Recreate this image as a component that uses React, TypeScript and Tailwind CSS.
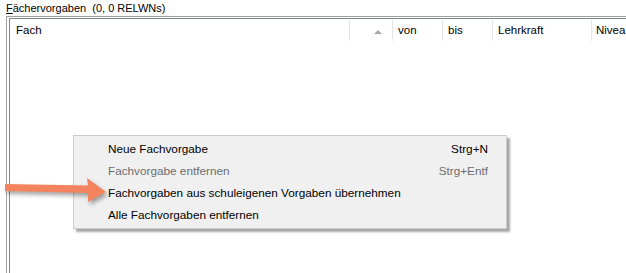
import React from "react";

const menuItems = [
  { label: "Neue Fachvorgabe", shortcut: "Strg+N", disabled: false },
  { label: "Fachvorgabe entfernen", shortcut: "Strg+Entf", disabled: true },
  { label: "Fachvorgaben aus schuleigenen Vorgaben übernehmen", shortcut: "", disabled: false },
  { label: "Alle Fachvorgaben entfernen", shortcut: "", disabled: false },
];

export default function App() {
  return (
    <div
      className="relative w-[626px] h-[273px] overflow-hidden bg-white text-black"
      style={{ fontFamily: '"Liberation Sans", Arial, sans-serif' }}
    >
      {/* Title */}
      <div className="h-[16px] pl-[6px] pt-[2px] text-[11px] leading-[13px] whitespace-pre">
        <span className="underline underline-offset-[1px]">F</span>ächervorgaben  (0, 0 RELWNs)
      </div>

      {/* Frame */}
      <div className="ml-[6px] border-l border-t border-[#a0a0a0] pl-[2px] pt-[1px] h-[257px]">
        <div className="h-full border-l border-t border-[#828790] bg-white">
          {/* Header */}
          <div className="flex h-[23px] items-stretch text-[11.5px] leading-[13px]">
            <div className="w-[339px] flex items-center pl-[6px] py-[1px]">
              <span>Fach</span>
            </div>
            <div className="w-[43px] flex items-center justify-end pr-[10px] border-l border-[#e5e5e5] my-[1px]">
              <svg width="8" height="5" viewBox="0 0 8 5" className="mt-[1px]">
                <polygon points="0,5 4,1 8,5" fill="#a7a7a7" />
              </svg>
            </div>
            <div className="w-[50px] flex items-center pl-[5px] border-l border-[#e5e5e5] my-[1px]">von</div>
            <div className="w-[50px] flex items-center pl-[5px] border-l border-[#e5e5e5] my-[1px]">bis</div>
            <div className="w-[99px] flex items-center pl-[5px] border-l border-[#e5e5e5] my-[1px]">Lehrkraft</div>
            <div className="flex-1 min-w-0 flex items-center pl-[4px] border-l border-[#e5e5e5] my-[1px] whitespace-nowrap">Niveau</div>
          </div>
        </div>
      </div>

      {/* Context menu */}
      <div
        className="absolute left-[73px] top-[135px] w-[434px] h-[94px] border border-[#cccccc] bg-[#f0f0f0] pt-[2px] shadow-[3px_3px_2px_rgba(0,0,0,0.35)] text-[11.75px]"
      >
        {menuItems.map((it) => (
          <div key={it.label} className="flex h-[22px] items-center pl-[34px] pr-[18px]">
            <span className={it.disabled ? "text-[#6d6d6d]" : "text-black"}>{it.label}</span>
            <span className={"ml-auto " + (it.disabled ? "text-[#6d6d6d]" : "text-black")}>{it.shortcut}</span>
          </div>
        ))}
      </div>

      {/* Orange arrow */}
      <svg
        className="absolute left-0 top-[170px] drop-shadow-[2px_3px_2px_rgba(0,0,0,0.35)]"
        width="115"
        height="40"
        viewBox="0 170 115 40"
      >
        <polygon
          points="5,184 88,185.5 87,178 106,192 88,202 88,193 5,191"
          fill="#f4845f"
        />
      </svg>
    </div>
  );
}
